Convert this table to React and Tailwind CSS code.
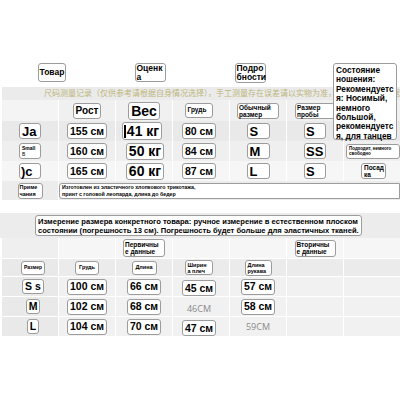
import React from 'react'

const FONT = "font-['Liberation_Sans','Noto_Sans_CJK_SC',Arial,sans-serif]"

function Box({ children, className = '' }) {
  return (
    <span
      className={`inline-flex items-center whitespace-nowrap bg-white border border-[#9c9c9c] rounded-[3px] font-bold text-black leading-none ${className}`}
    >
      {children}
    </span>
  )
}

function Cell({ children, className = '' }) {
  return <div className={`flex items-center justify-center ${className}`}>{children}</div>
}

const TOP_ROWS = [
  {
    bg: 'bg-[#e9e9e9]',
    size: <Box className="w-[22px] h-[16px] pl-[2px] text-[13px]">Ja</Box>,
    height: '155 см',
    weight: <Box className="h-[18px] pl-[1px] pr-[2px] text-[14px] ml-[-4px]"><span className="w-[2px] h-[13px] bg-black mr-[1px]" />41 кг</Box>,
    chest: '80 см',
    normal: 'S',
    sample: 'S',
    note: null,
  },
  {
    bg: 'bg-[#efefef]',
    size: (
      <Box className="w-[22px] h-[16px] pl-[2px] text-[5px] !leading-[6px] flex-col !items-start justify-center">
        <span>Small</span>
        <span className="font-normal">B</span>
      </Box>
    ),
    height: '160 см',
    weight: <Box className="h-[17px] px-[2px] text-[14px] ml-[2px]">50 кг</Box>,
    chest: '84 см',
    normal: 'M',
    sample: 'SS',
    note: (
      <Box className="w-[57px] h-[15px] pl-[2px] text-[4.5px] !leading-[5.5px] flex-col !items-start justify-center ml-[2px]">
        <span>Подходит, немного</span>
        <span>свободно</span>
      </Box>
    ),
  },
  {
    bg: 'bg-[#f6f6f6]',
    size: <Box className="w-[22px] h-[16px] pl-[1px] text-[13px]">)c</Box>,
    height: '165 см',
    weight: <Box className="h-[17px] px-[2px] text-[14px] ml-[2px]">60 кг</Box>,
    chest: '87 см',
    normal: 'L',
    sample: 'S',
    note: (
      <Box className="w-[25px] h-[16px] pl-[2px] text-[6.5px] !leading-[7px] flex-col !items-start justify-center ml-[17px]">
        <span>Посад</span>
        <span>ка</span>
      </Box>
    ),
  },
]

const BOTTOM_ROWS = [
  { size: 'S s', chest: '100 см', len: '66 см', sh: '45 см', sl: '57 см', shPlain: false, slPlain: false },
  { size: 'M', chest: '102 см', len: '68 см', sh: '46CM', sl: '58 см', shPlain: true, slPlain: false },
  { size: 'L', chest: '104 см', len: '70 см', sh: '47 см', sl: '59CM', shPlain: false, slPlain: true },
]

function Measure({ value, plain }) {
  if (plain) return <span className="text-[9px] text-[#8a8a8a] font-['Open_Sans',sans-serif]">{value}</span>
  return <Box className="h-[16px] px-[2px] text-[10.5px]">{value}</Box>
}

export default function App() {
  return (
    <div className={`w-[400px] h-[400px] bg-white relative overflow-hidden ${FONT}`}>
      <div className="h-[63px]" />

      {/* header labels */}
      <div className="grid grid-cols-4 h-[20px] items-start">
        <Cell><Box className="w-[28px] h-[19px] pl-[1px] text-[8.5px] ml-[3px]">Товар</Box></Cell>
        <Cell>
          <Box className="w-[31px] h-[19px] pl-[1px] text-[8.5px] !leading-[9px] flex-col !items-start justify-center">
            <span>Оценк</span><span>а</span>
          </Box>
        </Cell>
        <Cell>
          <Box className="w-[31px] h-[20px] pl-[1px] text-[8.5px] !leading-[9px] flex-col !items-start justify-center">
            <span>Подро</span><span>бности</span>
          </Box>
        </Cell>
        <div />
      </div>

      {/* faded chinese band */}
      <div className="h-[13px] mt-[4px] ml-[2px] bg-[#ebebeb] flex items-center pl-[42px] overflow-hidden whitespace-nowrap text-[8px] text-[#bdb67c] leading-none">
        尺码测量记录（仅供参考请根据自身情况选择），手工测量存在误差请以实物为准，仔细对比尺码数据
      </div>

      {/* top table */}
      <div className="ml-[2px] grid grid-cols-7 gap-x-px bg-white">
        {/* header row */}
        <div className="bg-[#f4f4f4] h-[21px]" />
        <Cell className="bg-[#f0f0f0] h-[21px]"><Box className="h-[16px] px-[2px] text-[10px]">Рост</Box></Cell>
        <Cell className="bg-[#f0f0f0] h-[21px]"><Box className="h-[18px] px-[2px] text-[14px]">Вес</Box></Cell>
        <Cell className="bg-[#f0f0f0] h-[21px]"><Box className="w-[28px] h-[15px] pl-[2px] text-[6.5px] ml-[-5px]">Грудь</Box></Cell>
        <Cell className="bg-[#f0f0f0] h-[21px]">
          <Box className="w-[42px] h-[16px] pl-[1px] text-[6.5px] !leading-[7px] flex-col !items-start justify-center">
            <span>Обычный</span><span>размер</span>
          </Box>
        </Cell>
        <Cell className="bg-[#f0f0f0] h-[21px]">
          <Box className="w-[40px] h-[16px] pl-[1px] text-[6.5px] !leading-[7px] flex-col !items-start justify-center">
            <span>Размер</span><span>пробы</span>
          </Box>
        </Cell>
        <div className="bg-[#f0f0f0] h-[21px]" />

        {TOP_ROWS.map((r, i) => (
          <React.Fragment key={i}>
            <Cell className={`${r.bg} h-[20px]`}>{r.size}</Cell>
            <Cell className={`${r.bg} h-[20px]`}><Box className="h-[16px] px-[2px] text-[10.5px]">{r.height}</Box></Cell>
            <Cell className={`${r.bg} h-[20px]`}>{r.weight}</Cell>
            <Cell className={`${r.bg} h-[20px]`}><Box className="h-[16px] px-[2px] text-[10.5px] ml-[-4px]">{r.chest}</Box></Cell>
            <Cell className={`${r.bg} h-[20px]`}><Box className="w-[23px] h-[16px] pl-[2px] text-[13px]">{r.normal}</Box></Cell>
            <Cell className={`${r.bg} h-[20px]`}><Box className="w-[22px] h-[16px] pl-[1px] text-[13px]">{r.sample}</Box></Cell>
            <div className={`${r.bg} h-[20px] flex items-center`}>{r.note}</div>
          </React.Fragment>
        ))}

        {/* notes row */}
        <Cell className="bg-[#ececec] h-[19px]">
          <Box className="w-[25px] h-[16px] pl-[1px] text-[5.5px] !leading-[6.5px] flex-col !items-start justify-center">
            <span>Приме</span><span>чания</span>
          </Box>
        </Cell>
        <div className="col-span-6 bg-[#ececec] h-[19px] flex items-center">
          <Box className="w-full h-[16px] pl-[2px] text-[5.3px] !leading-[6.5px] flex-col !items-start justify-center rounded-r-none">
            <span>Изготовлен из эластичного хлопкового трикотажа,</span>
            <span>принт с головой леопарда, длина до бедер</span>
          </Box>
        </div>
      </div>

      <div className="h-[13px]" />

      {/* measurement caption */}
      <div className="h-[25px] bg-[#ececec] flex items-center pl-[35px]">
        <Box className="h-[21px] px-[2px] text-[7.6px] !leading-[9px] flex-col !items-start justify-center">
          <span>Измерение размера конкретного товара: ручное измерение в естественном плоском</span>
          <span>состоянии (погрешность 13 см). Погрешность будет больше для эластичных тканей.</span>
        </Box>
      </div>

      {/* bottom table */}
      <div className="ml-[2px] grid grid-cols-7 gap-x-px gap-y-px bg-white">
        <div className="bg-[#efefef] h-[20px]" />
        <div className="bg-[#f6f6f6] h-[20px]" />
        <Cell className="bg-[#f6f6f6] h-[20px]">
          <Box className="w-[42px] h-[18px] pl-[1px] text-[6.5px] !leading-[7.5px] flex-col !items-start justify-center">
            <span>Первичны</span><span>е данные</span>
          </Box>
        </Cell>
        <div className="bg-[#f6f6f6] h-[20px]" />
        <div className="bg-[#f6f6f6] h-[20px]" />
        <Cell className="bg-[#f6f6f6] h-[20px]">
          <Box className="w-[41px] h-[17px] pl-[1px] text-[6.5px] !leading-[7.5px] flex-col !items-start justify-center">
            <span>Вторичны</span><span>е данные</span>
          </Box>
        </Cell>
        <div className="bg-[#f6f6f6] h-[20px]" />

        <Cell className="bg-[#e9e9e9] h-[17px]"><Box className="w-[24px] h-[14px] justify-center text-[5px] ml-[6px]">Размер</Box></Cell>
        <Cell className="bg-[#ebebeb] h-[17px]"><Box className="w-[24px] h-[14px] justify-center text-[5.5px]">Грудь</Box></Cell>
        <Cell className="bg-[#ebebeb] h-[17px]"><Box className="w-[25px] h-[14px] justify-center text-[5.5px]">Длина</Box></Cell>
        <Cell className="bg-[#ebebeb] h-[17px]">
          <Box className="w-[28px] h-[15px] pl-[2px] text-[5.5px] !leading-[6px] flex-col !items-start justify-center ml-[-5px]">
            <span>Ширин</span><span>а плеч</span>
          </Box>
        </Cell>
        <Cell className="bg-[#ebebeb] h-[17px]">
          <Box className="w-[27px] h-[16px] pl-[2px] text-[5.5px] !leading-[6px] flex-col !items-start justify-center">
            <span>Длина</span><span>рукава</span>
          </Box>
        </Cell>
        <div className="bg-[#ebebeb] h-[17px]" />
        <div className="bg-[#ebebeb] h-[17px]" />

        {BOTTOM_ROWS.map((r, i) => (
          <React.Fragment key={i}>
            <Cell className="bg-[#e9e9e9] h-[19px]">
              <Box className="h-[15px] px-[2px] text-[10.5px] ml-[6px]">{r.size}</Box>
            </Cell>
            <Cell className="bg-[#f1f1f1] h-[19px]"><Box className="h-[16px] px-[2px] text-[10.5px]">{r.chest}</Box></Cell>
            <Cell className="bg-[#f1f1f1] h-[19px]"><Box className="h-[16px] px-[2px] text-[10.5px]">{r.len}</Box></Cell>
            <Cell className="bg-[#f1f1f1] h-[19px]">
              <span className="ml-[-4px]"><Measure value={r.sh} plain={r.shPlain} /></span>
            </Cell>
            <Cell className="bg-[#f1f1f1] h-[19px]"><Measure value={r.sl} plain={r.slPlain} /></Cell>
            <div className="bg-[#f1f1f1] h-[19px]" />
            <div className="bg-[#f1f1f1] h-[19px]" />
          </React.Fragment>
        ))}
      </div>

      {/* wearing-condition note overlapping the table */}
      <div className="absolute left-[333px] top-[63px] w-[64px] h-[77px] bg-white border border-[#9c9c9c] rounded-[3px] pl-[2px] pt-[2px] text-[8.3px] leading-[9.4px] font-bold text-black">
        Состояние<br />ношения:<br />Рекомендуетс<br />я: Носимый,<br />немного<br />большой,<br />рекомендуетс<br />я, для танцев
      </div>
    </div>
  )
}
